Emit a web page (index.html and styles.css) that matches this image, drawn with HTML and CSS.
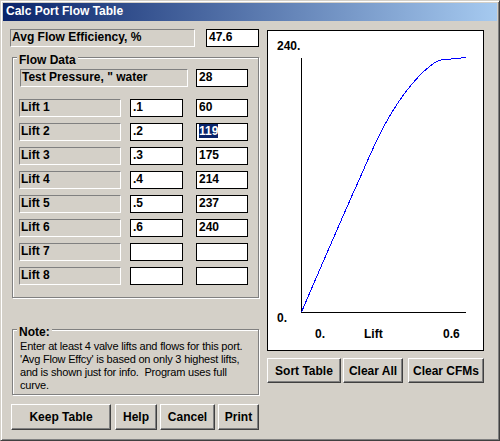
FILE: index.html
```html
<!DOCTYPE html>
<html>
<head>
<meta charset="utf-8">
<link rel="stylesheet" href="styles.css">
</head>
<body>
<div class="window">
  <div class="titlebar">Calc Port Flow Table</div>
  <div class="client">
    <div class="left">
      <div class="row">
        <div class="static avg-label">Avg Flow Efficiency, %</div>
        <div class="edit avg-edit">47.6</div>
      </div>
      <div class="group flow">
        <span class="legend">Flow Data</span>
        <div class="row">
          <div class="static tp-label">Test Pressure, " water</div>
          <div class="edit tp-edit">28</div>
        </div>
        <div class="lifts">
          <div class="row"><div class="static lift-label">Lift 1</div><div class="edit lift-val">.1</div><div class="edit cfm-val">60</div></div>
          <div class="row"><div class="static lift-label">Lift 2</div><div class="edit lift-val">.2</div><div class="edit cfm-val"><span class="sel">119</span></div></div>
          <div class="row"><div class="static lift-label">Lift 3</div><div class="edit lift-val">.3</div><div class="edit cfm-val">175</div></div>
          <div class="row"><div class="static lift-label">Lift 4</div><div class="edit lift-val">.4</div><div class="edit cfm-val">214</div></div>
          <div class="row"><div class="static lift-label">Lift 5</div><div class="edit lift-val">.5</div><div class="edit cfm-val">237</div></div>
          <div class="row"><div class="static lift-label">Lift 6</div><div class="edit lift-val">.6</div><div class="edit cfm-val">240</div></div>
          <div class="row"><div class="static lift-label">Lift 7</div><div class="edit lift-val"></div><div class="edit cfm-val"></div></div>
          <div class="row"><div class="static lift-label">Lift 8</div><div class="edit lift-val"></div><div class="edit cfm-val"></div></div>
        </div>
      </div>
      <div class="group note">
        <span class="legend">Note:</span>
        <p class="note-text">Enter at least 4 valve lifts and flows for this port.<br>'Avg Flow Effcy' is based on only 3 highest lifts,<br>and is shown just for info.&nbsp; Program uses full<br>curve.</p>
      </div>
      <div class="buttons">
        <div class="btn keep">Keep Table</div>
        <div class="btn help">Help</div>
        <div class="btn cancel">Cancel</div>
        <div class="btn print">Print</div>
      </div>
    </div>
    <div class="right">
      <div class="chart">
        <svg class="plot" width="215" height="319" viewBox="1 1 215 319">
          <text x="10" y="20">240.</text>
          <text x="10" y="292">0.</text>
          <text x="48" y="308">0.</text>
          <text x="97" y="308">Lift</text>
          <text x="176" y="308">0.6</text>
          <line x1="34.5" y1="28" x2="34.5" y2="283" stroke="#000" stroke-width="1" shape-rendering="crispEdges"/>
          <line x1="34" y1="282.5" x2="199" y2="282.5" stroke="#000" stroke-width="1" shape-rendering="crispEdges"/>
          <path d="M34.5,282 C39,271.4 52.8,239.4 62,218.3 C71.2,197.2 80.3,176 89.5,155.6 C98.7,135.2 107.8,112.8 117,96 C126.2,79.2 135.3,65.6 144.5,54.6 C153.7,43.6 162.8,34.8 172,30.2 L199,27.5" fill="none" stroke="#0000FF" stroke-width="1" shape-rendering="crispEdges"/>
        </svg>
      </div>
      <div class="buttons chart-buttons">
        <div class="btn sort">Sort Table</div>
        <div class="btn clear-all">Clear All</div>
        <div class="btn clear-cfm">Clear CFMs</div>
      </div>
    </div>
  </div>
</div>
</body>
</html>
```

FILE: styles.css
```css
* { box-sizing: border-box; }
html, body { margin: 0; padding: 0; }
body {
  width: 500px;
  height: 441px;
  overflow: hidden;
  background: #D4D0C8;
  font-family: "Liberation Sans", Arial, sans-serif;
  font-size: 12px;
  font-weight: bold;
  color: #000;
}
.window {
  width: 500px;
  height: 441px;
  border: 1px solid;
  border-color: #D4D0C8 #404040 #404040 #D4D0C8;
  box-shadow: inset 1px 1px #fff, inset -1px -1px #808080;
  padding: 2px;
  background: #D4D0C8;
  display: flex;
  flex-direction: column;
}
.titlebar {
  height: 18px;
  line-height: 17px;
  padding-left: 3px;
  color: #fff;
  background: linear-gradient(to right, #0A246A, #A6CAF0);
  white-space: nowrap;
}
.client {
  display: flex;
  align-items: flex-start;
  padding-left: 7px;
}
.left {
  width: 250px;
  padding-top: 8px;
  display: flex;
  flex-direction: column;
  align-items: flex-start;
}
.row { display: flex; }
.static {
  height: 18px;
  border: 1px solid;
  border-color: #808080 #fff #fff #808080;
  line-height: 15px;
  padding-left: 1px;
  white-space: nowrap;
}
.edit {
  height: 18px;
  border: 1px solid #000;
  background: #fff;
  line-height: 15px;
  padding-left: 2px;
  white-space: nowrap;
}
.sel { background: #0A246A; color: #fff; }
.avg-label { width: 185px; }
.avg-edit { width: 53px; margin-left: 11px; }
.group {
  position: relative;
  margin-left: 2px;
  width: 247px;
  border: 1px solid #808080;
  box-shadow: inset 1px 1px #fff, 1px 1px #fff;
}
.legend {
  position: absolute;
  left: 4px;
  top: -5px;
  padding: 0 2px;
  line-height: 14px;
  background: #D4D0C8;
}
.flow {
  margin-top: 10px;
  height: 241px;
  padding: 11px 0 0 7px;
}
.tp-label { width: 168px; }
.tp-edit { width: 52px; margin-left: 8px; }
.lifts {
  margin-top: 12px;
  display: flex;
  flex-direction: column;
  gap: 6px;
}
.lift-label { width: 102px; margin-left: -1px; }
.lift-val { width: 53px; margin-left: 9px; }
.cfm-val { width: 52px; margin-left: 13px; }
.note {
  margin-top: 31px;
  height: 66px;
  padding: 10px 0 0 7px;
}
.note-text {
  margin: 0;
  font-weight: normal;
  font-size: 11px;
  line-height: 13px;
  letter-spacing: -0.2px;
  white-space: nowrap;
}
.buttons {
  display: flex;
  margin-top: 9px;
  margin-left: 1px;
}
.btn {
  height: 26px;
  border: 1px solid;
  border-color: #fff #404040 #404040 #fff;
  box-shadow: inset -1px -1px #808080;
  display: flex;
  align-items: center;
  justify-content: center;
  white-space: nowrap;
}
.keep { width: 100px; }
.help { width: 42px; margin-left: 4px; }
.cancel { width: 55px; margin-left: 3px; }
.print { width: 41px; margin-left: 3px; }
.right {
  margin-left: 7px;
  padding-top: 9px;
}
.chart {
  width: 217px;
  height: 321px;
  background: #fff;
  border: 1px solid #000;
}
.plot {
  display: block;
  font-family: "Liberation Sans", Arial, sans-serif;
  font-size: 12px;
  font-weight: bold;
}
.chart-buttons {
  margin-top: 7px;
  margin-left: 0;
}
.chart-buttons .btn { height: 25px; }
.sort { width: 74px; }
.clear-all { width: 60px; margin-left: 2px; }
.clear-cfm { width: 76px; margin-left: 5px; }
```
